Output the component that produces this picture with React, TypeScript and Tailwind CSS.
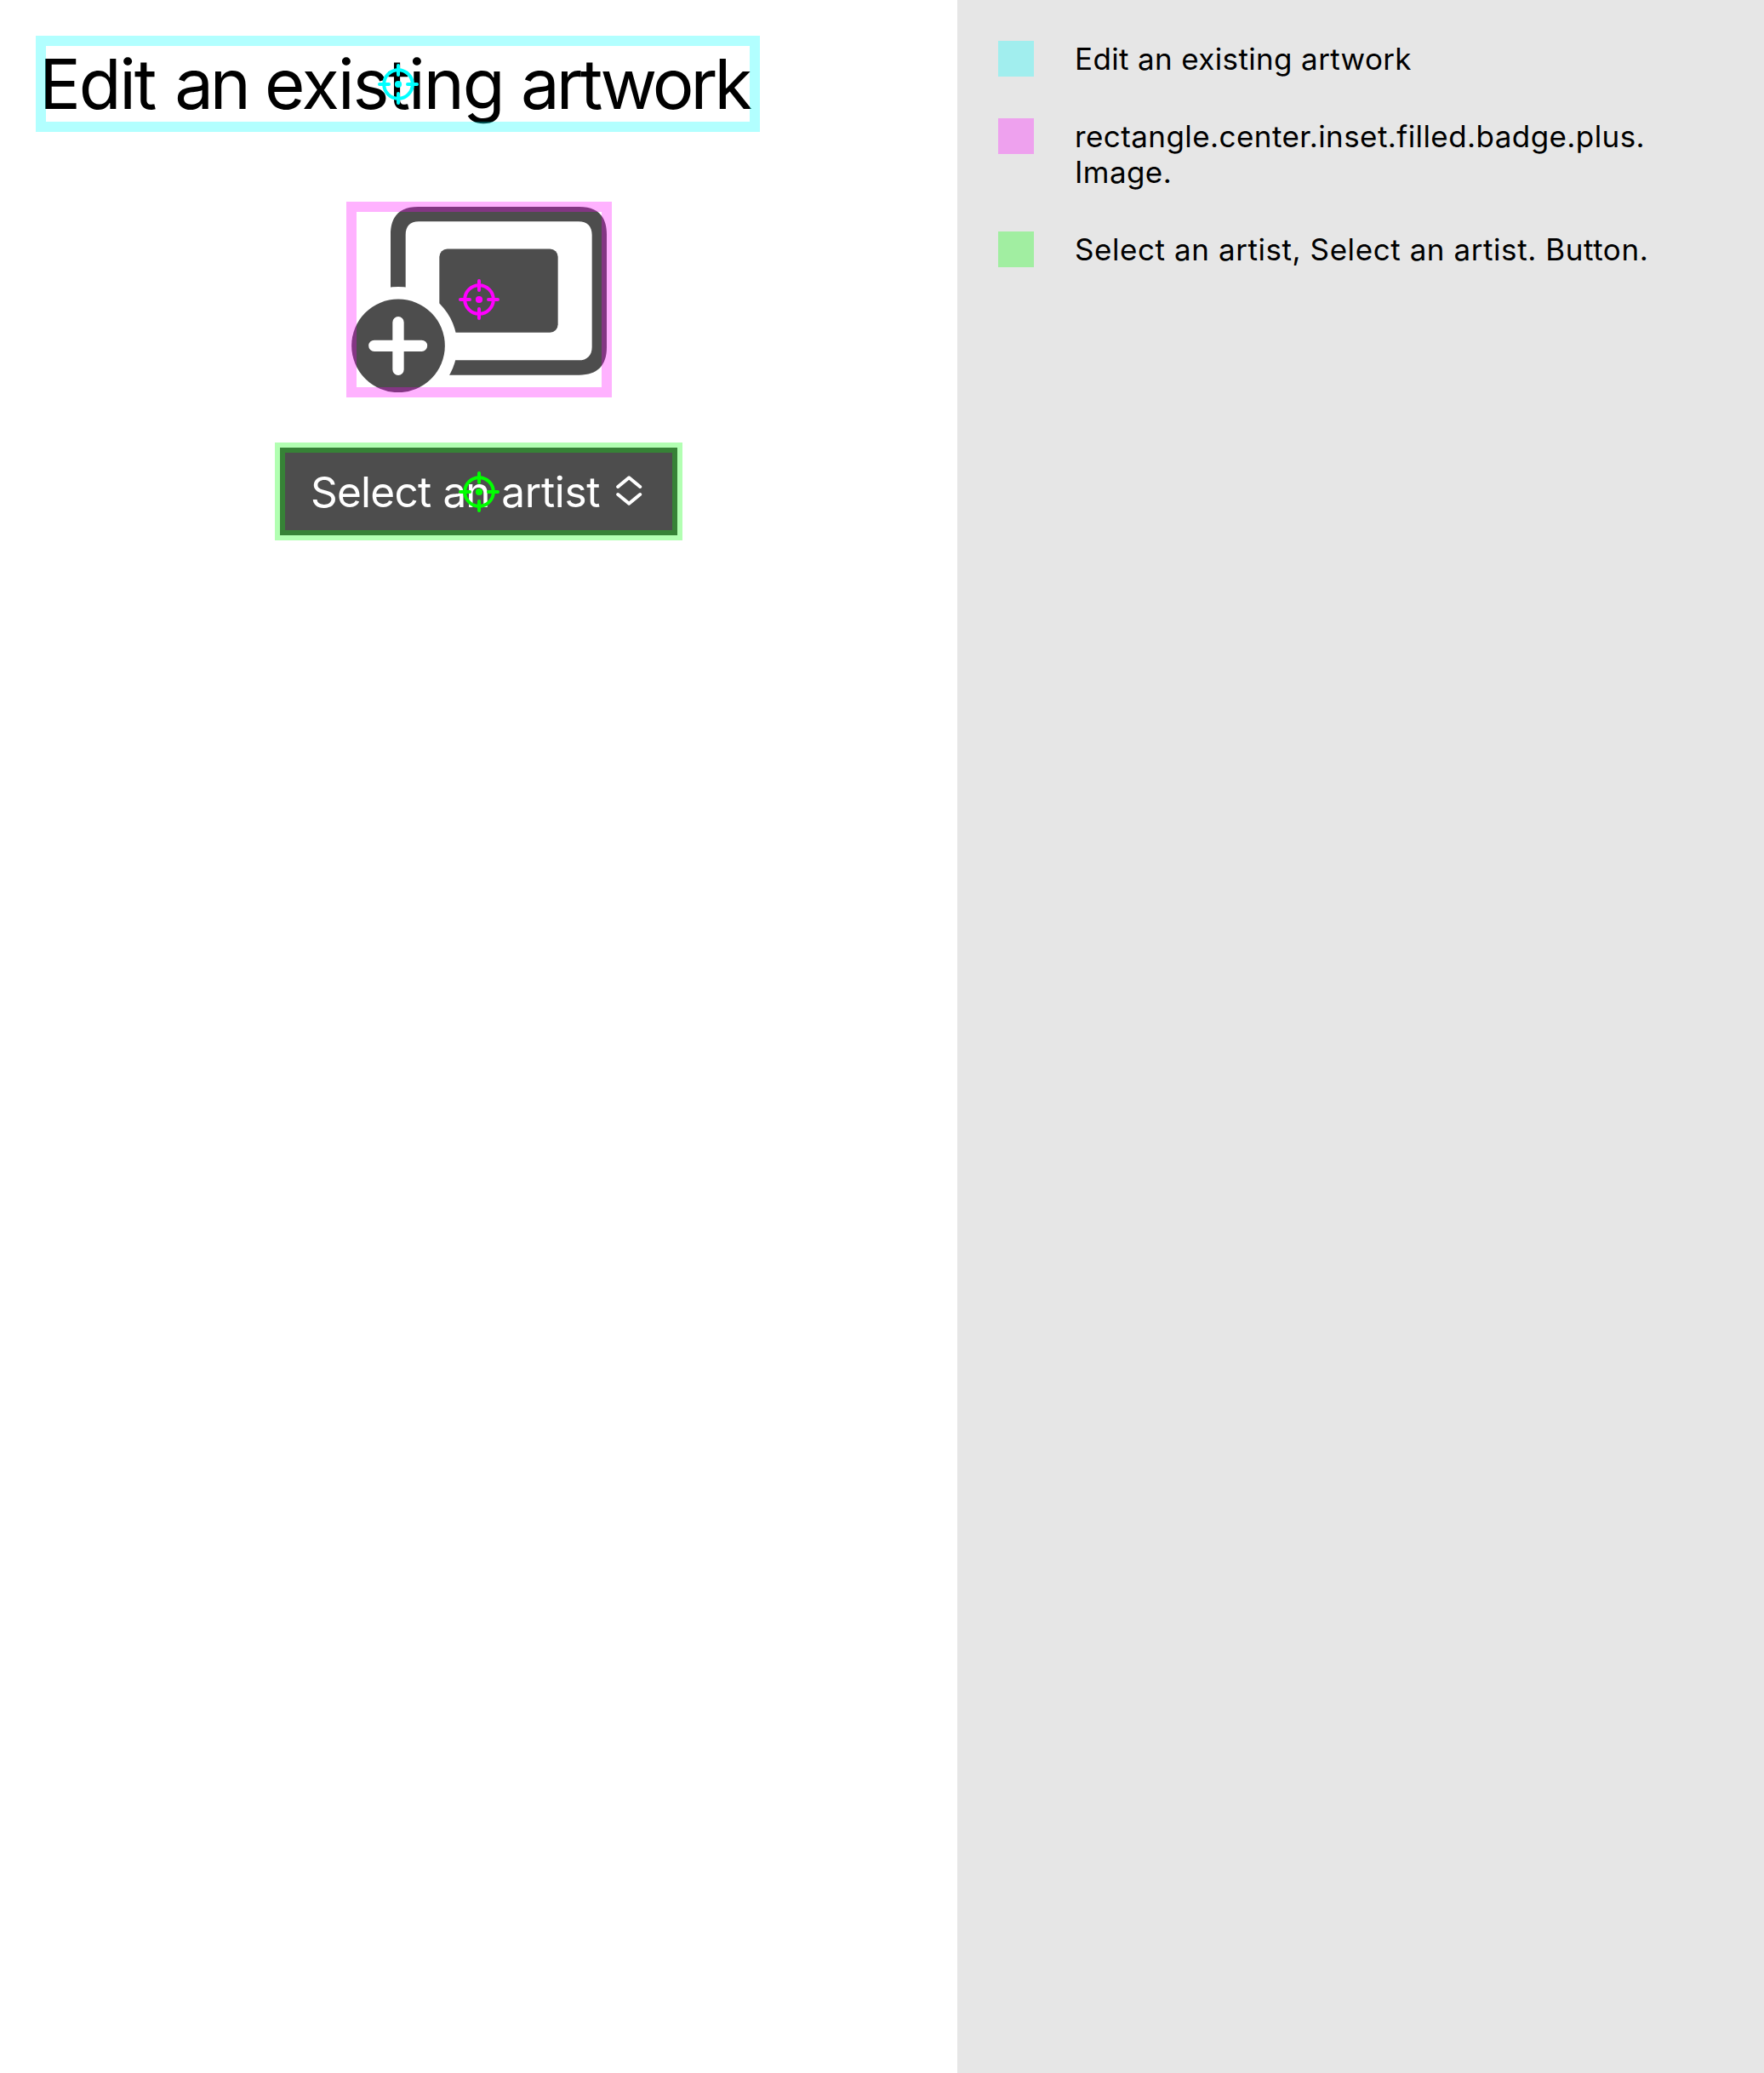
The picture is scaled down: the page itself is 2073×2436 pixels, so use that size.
import React from "react";

function Crosshair({ className }: { className: string }) {
  return (
    <svg viewBox="0 0 48 48" className={`absolute left-1/2 top-1/2 size-12 -translate-x-1/2 -translate-y-1/2 ${className}`} fill="none" stroke="currentColor" strokeWidth="4" strokeLinecap="round">
      <circle cx="24" cy="24" r="16.8" />
      <circle cx="24" cy="24" r="4.1" fill="currentColor" stroke="none" />
      <path d="M24 2v11M24 35v11M2 24h11M35 24h11" />
    </svg>
  );
}

function Highlight({ border, mark }: { border: string; mark: string }) {
  return (
    <>
      <div className={`absolute -inset-1.5 border-12 ${border}`} />
      <Crosshair className={mark} />
    </>
  );
}

function RectangleBadgePlus() {
  return (
    <svg viewBox="39 39 900 654" className="h-[218px] w-[300px]">
      <mask id="badge-gap" maskUnits="userSpaceOnUse" x="0" y="0" width="1000" height="720">
        <rect width="1000" height="720" fill="white" />
        <circle cx="204" cy="529" r="208" fill="black" />
      </mask>
      <g fill="#4d4d4d">
        <g mask="url(#badge-gap)">
          <path
            fillRule="evenodd"
            d="M177 136C177 72 210 39 274 39H842C906 39 939 72 939 136V535C939 599 906 632 842 632H274C210 632 177 599 177 535ZM230 138V533C230 563 246 580 276 580H840C870 580 887 563 887 533V138C887 108 870 91 840 91H276C246 91 230 108 230 138Z"
          />
          <rect x="349" y="187.500" width="418" height="294.500" rx="28" />
        </g>
        <circle cx="204" cy="529" r="164.500" />
      </g>
      <path d="M204 446V613M119.500 529H286.500" stroke="white" strokeWidth="40" strokeLinecap="round" />
    </svg>
  );
}

const legend = [
  { swatch: "bg-[#00ffff]/30", lines: ["Edit an existing artwork"], tracking: "tracking-[0.36px]" },
  { swatch: "bg-[#ff00ff]/30", lines: ["rectangle.center.inset.filled.badge.plus.", "Image."], tracking: "tracking-[0.42px]" },
  { swatch: "bg-[#00ff00]/30", lines: ["Select an artist, Select an artist. Button."], tracking: "tracking-[0.57px]" },
];

export default function App() {
  return (
    <div className="flex h-[2436px] w-[2073px] bg-white font-['Inter',sans-serif] text-black">
      <main className="flex w-[1125px] flex-col items-center pt-12">
        <div className="relative ml-12 h-[101px] w-[839px] self-start">
          <h1 className="-ml-0.5 whitespace-nowrap text-[81.4px] leading-[101px] tracking-[-2.5px]">
            <span className="mr-[2.5px] tracking-[-2.2px]">Edit</span> <span className="tracking-[-4.2px]">an</span>{" "}
            <span className="tracking-[-2.06px]">existing</span> <span className="tracking-[-3.95px]">artwork</span>
          </h1>
          <Highlight border="border-[#00ffff]/30" mark="text-[#00ffff]" />
        </div>
        <div className="relative ml-px mt-[94px] h-[218px] w-[300px]">
          <RectangleBadgePlus />
          <Highlight border="border-[#ff00ff]/30" mark="text-[#ff00ff]" />
        </div>
        <button className="relative mt-[65px] flex h-[103px] w-[467px] items-center bg-[#4d4d4d] pl-9 text-left text-white">
          <span className="mt-px w-[359px] whitespace-nowrap text-[49.5px] leading-[102px]">
            <span className="tracking-[-0.75px]">Select</span> <span className="tracking-[-1px]">an</span>{" "}
            <span className="tracking-[-0.3px]">artist</span>
          </span>
          <svg viewBox="0 0 31 35" className="mb-0.5 h-[35px] w-[31px]" fill="none" stroke="currentColor" strokeWidth="4" strokeLinecap="round" strokeLinejoin="round">
            <path d="M2.200 13 15.200 2.200 28.200 13M2.200 22 15.200 32.800 28.200 22" />
          </svg>
          <Highlight border="border-[#00ff00]/30" mark="text-[#00ff00]" />
        </button>
      </main>
      <aside className="flex w-[948px] flex-col gap-12 bg-[#e6e6e6] pl-12 pt-12">
        {legend.map((item) => (
          <div key={item.lines[0]} className="flex gap-12">
            <div className={`size-[42px] ${item.swatch}`} />
            <div className={`text-[35px] leading-[42.5px] ${item.tracking}`}>
              {item.lines.map((line) => (
                <p key={line}>{line}</p>
              ))}
            </div>
          </div>
        ))}
      </aside>
    </div>
  );
}
